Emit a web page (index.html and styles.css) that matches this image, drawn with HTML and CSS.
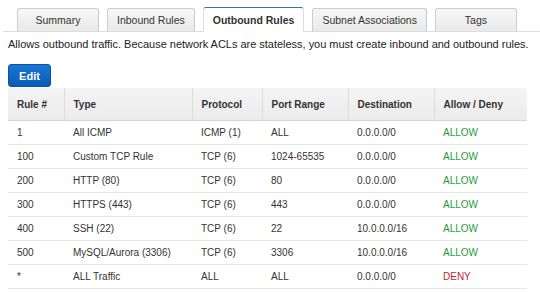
FILE: index.html
```html
<!DOCTYPE html>
<html>
	<head>
		<meta charset="utf-8">
		<title>Network ACL</title>
		<link rel="stylesheet" href="styles.css">
	</head>
	<body>
		<div class="tabs">
			<div class="tab">Summary</div>
			<div class="tab">Inbound Rules</div>
			<div class="tab active">Outbound Rules</div>
			<div class="tab">Subnet Associations</div>
			<div class="tab">Tags</div>
		</div>
		<p class="desc">Allows outbound traffic. Because network ACLs are stateless, you must create inbound and outbound rules.</p>
		<button class="btn-edit">Edit</button>
		<table class="rules">
			<colgroup>
				<col style="width: 56px">
				<col style="width: 128px">
				<col style="width: 70px">
				<col style="width: 86px">
				<col style="width: 86px">
				<col style="width: 93px">
			</colgroup>
			<thead>
				<tr>
					<th>Rule #</th>
					<th>Type</th>
					<th>Protocol</th>
					<th>Port Range</th>
					<th>Destination</th>
					<th>Allow / Deny</th>
				</tr>
			</thead>
			<tbody>
				<tr><td>1</td><td>All ICMP</td><td>ICMP (1)</td><td>ALL</td><td>0.0.0.0/0</td><td class="allow">ALLOW</td></tr>
				<tr><td>100</td><td>Custom TCP Rule</td><td>TCP (6)</td><td>1024-65535</td><td>0.0.0.0/0</td><td class="allow">ALLOW</td></tr>
				<tr><td>200</td><td>HTTP (80)</td><td>TCP (6)</td><td>80</td><td>0.0.0.0/0</td><td class="allow">ALLOW</td></tr>
				<tr><td>300</td><td>HTTPS (443)</td><td>TCP (6)</td><td>443</td><td>0.0.0.0/0</td><td class="allow">ALLOW</td></tr>
				<tr><td>400</td><td>SSH (22)</td><td>TCP (6)</td><td>22</td><td>10.0.0.0/16</td><td class="allow">ALLOW</td></tr>
				<tr><td>500</td><td>MySQL/Aurora (3306)</td><td>TCP (6)</td><td>3306</td><td>10.0.0.0/16</td><td class="allow">ALLOW</td></tr>
				<tr><td>*</td><td>ALL Traffic</td><td>ALL</td><td>ALL</td><td>0.0.0.0/0</td><td class="deny">DENY</td></tr>
			</tbody>
		</table>
	</body>
</html>
```
FILE: styles.css
```css
body {
	margin: 0;
	font-family: "Liberation Sans", Arial, sans-serif;
	color: #333;
	background: #fff;
}
.tabs {
	display: flex;
	gap: 8px;
	margin-left: 3px;
	padding: 8px 0 0 14px;
	border-bottom: 1px solid #ddd;
}
.tab {
	box-sizing: border-box;
	min-width: 82px;
	height: 24px;
	line-height: 22px;
	padding: 0 9px;
	margin-bottom: -1px;
	font-size: 10.5px;
	text-align: center;
	color: #333;
	background: linear-gradient(#f7f7f7, #e9e9e9);
	border: 1px solid #ccc;
	border-bottom-color: #ddd;
	border-radius: 3px 3px 0 0;
}
.tab.active {
	height: 25px;
	margin-top: -1px;
	line-height: 24px;
	font-weight: bold;
	background: #fff;
	border-color: #3a72b0 #ddd #fff #ddd;
}
.desc {
	margin: 5px 8px 0;
	font-size: 11px;
	line-height: 14px;
	letter-spacing: -0.02px;
	color: #222;
}
.btn-edit {
	display: block;
	margin: 13px 0 0 8px;
	width: 43px;
	height: 23px;
	padding: 0;
	font-family: inherit;
	font-size: 11px;
	font-weight: bold;
	color: #fff;
	background: linear-gradient(#1a75d1, #0a5cb8);
	border: 1px solid #0852a8;
	border-radius: 3px;
}
.rules {
	margin: 1px 0 0 8px;
	width: 519px;
	table-layout: fixed;
	border-collapse: collapse;
	font-size: 10px;
}
.rules th {
	height: 32px;
	padding: 0 0 0 9px;
	text-align: left;
	font-weight: bold;
	color: #333;
	background: linear-gradient(#f4f4f4, #ebebeb);
	border-right: 1px solid #dcdcdc;
	border-bottom: 1px solid #d5d5d5;
}
.rules th:last-child {
	border-right: none;
}
.rules td {
	height: 23px;
	padding: 0 0 0 9px;
	color: #333;
	border-bottom: 1px solid #e6e6e6;
	white-space: nowrap;
}
.rules td.allow {
	color: #1e9a3a;
}
.rules td.deny {
	color: #c4262e;
}
```
